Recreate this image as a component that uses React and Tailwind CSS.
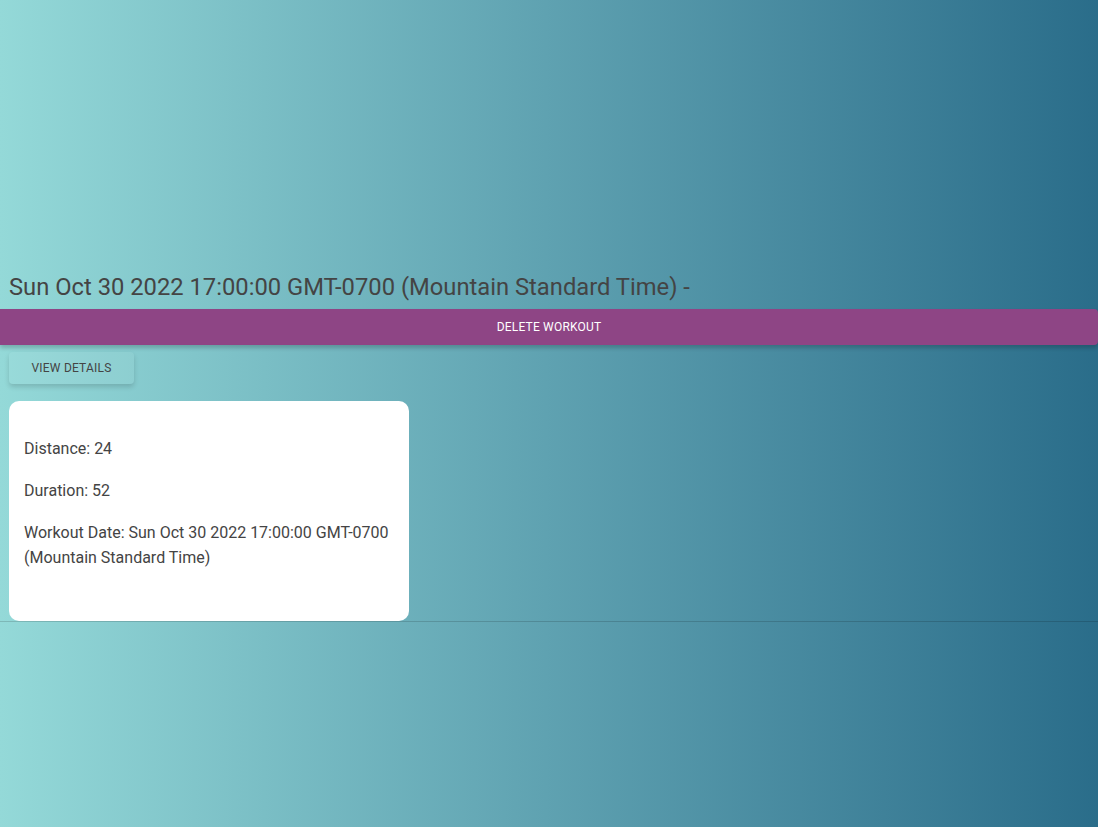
export default function App() {
  return (
    <div
      className="min-h-[827px] w-full bg-gradient-to-r from-[#94d9d8] to-[#2a6d8a] text-[#444]"
      style={{ fontFamily: "Roboto, 'Noto Sans', sans-serif" }}
    >
      <div className="pt-[271px]">
        <h2 className="pl-[9px] text-[23.75px] leading-[32px] font-normal text-[#444]">
          Sun Oct 30 2022 17:00:00 GMT-0700 (Mountain Standard Time) -
        </h2>
        <button className="mt-[6px] flex h-[36px] w-full items-center justify-center rounded-r-[4px] bg-[#8e4585] text-[12px] font-normal uppercase tracking-[0.2px] text-white shadow-[0_3px_4px_rgba(0,0,0,0.2)]">
          Delete Workout
        </button>
        <div className="pl-[9px] pt-[7px]">
          <button className="flex h-[32px] w-[125px] items-center justify-center rounded-[4px] bg-white/5 text-[12px] font-normal uppercase tracking-[0.2px] text-[#444] shadow-[0_3px_5px_rgba(0,0,0,0.15)]">
            View Details
          </button>
        </div>
        <div className="pl-[9px] pt-[17px]">
          <div className="w-[400px] rounded-[10px] bg-white px-[15px] pt-[35px] pb-[51px] text-[16px] leading-[25px] text-[#444]">
            <p className="mb-[17px]">Distance: 24</p>
            <p className="mb-[17px]">Duration: 52</p>
            <p>
              Workout Date: Sun Oct 30 2022 17:00:00 GMT-0700 (Mountain Standard
              Time)
            </p>
          </div>
        </div>
        <div className="h-px w-full bg-black/15" />
      </div>
    </div>
  );
}
